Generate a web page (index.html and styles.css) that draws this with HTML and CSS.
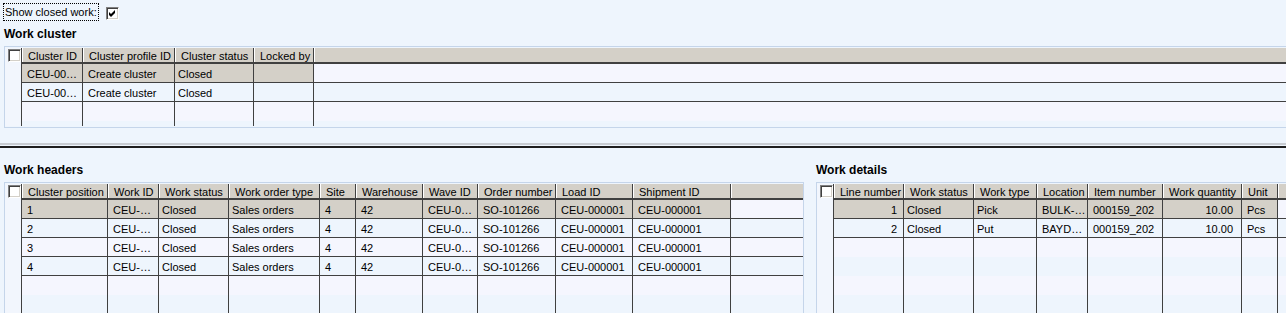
FILE: index.html
```html
<!DOCTYPE html>
<html lang="en">
<head>
    <meta charset="UTF-8">
    <title>Work clusters</title>
    <link rel="stylesheet" href="styles.css">
</head>
<body>
    <div class="toolbar">
        <span class="field-label">Show closed work:</span>
        <span class="check"><svg width="7" height="7" viewBox="0 0 7 7"><path d="M0 2 L2 4 L6 0 L6 3 L2 7 L0 5 Z" fill="#000"/></svg></span>
    </div>

    <h2 class="group-title">Work cluster</h2>
    <div class="panel panel-cluster">
        <div class="grid grid-cluster">
            <div class="row head">
                <div class="gutter"><span class="check"></span></div>
                <div>Cluster ID</div>
                <div>Cluster profile ID</div>
                <div>Cluster status</div>
                <div>Locked by</div>
                <div class="fill"></div>
            </div>
            <div class="row data current">
                <div class="gutter"></div>
                <div class="cell">CEU-00…</div>
                <div class="cell">Create cluster</div>
                <div class="cell e">Closed</div>
                <div class="cell"></div>
                <div class="fill"></div>
            </div>
            <div class="row data">
                <div class="gutter"></div>
                <div class="cell">CEU-00…</div>
                <div class="cell">Create cluster</div>
                <div class="cell e">Closed</div>
                <div class="cell"></div>
                <div class="fill"></div>
            </div>
            <div class="row">
                <div class="gutter"></div><div></div><div></div><div></div><div></div><div class="fill"></div>
            </div>
            <div class="row">
                <div class="gutter"></div><div></div><div></div><div></div><div></div><div class="fill"></div>
            </div>
        </div>
    </div>

    <div class="divider"></div>

    <div class="lower">
        <div class="section section-headers">
            <h2 class="group-title">Work headers</h2>
            <div class="panel">
                <div class="grid grid-headers">
                    <div class="row head">
                        <div class="gutter"><span class="check"></span></div>
                        <div>Cluster position</div>
                        <div>Work ID</div>
                        <div>Work status</div>
                        <div>Work order type</div>
                        <div>Site</div>
                        <div>Warehouse</div>
                        <div>Wave ID</div>
                        <div>Order number</div>
                        <div>Load ID</div>
                        <div>Shipment ID</div>
                        <div class="fill"></div>
                    </div>
                    <div class="row data current">
                        <div class="gutter"></div>
                        <div class="cell">1</div>
                        <div class="cell">CEU-…</div>
                        <div class="cell e">Closed</div>
                        <div class="cell e">Sales orders</div>
                        <div class="cell">4</div>
                        <div class="cell">42</div>
                        <div class="cell">CEU-0…</div>
                        <div class="cell">SO-101266</div>
                        <div class="cell">CEU-000001</div>
                        <div class="cell">CEU-000001</div>
                        <div class="fill"></div>
                    </div>
                    <div class="row data">
                        <div class="gutter"></div>
                        <div class="cell">2</div>
                        <div class="cell">CEU-…</div>
                        <div class="cell e">Closed</div>
                        <div class="cell e">Sales orders</div>
                        <div class="cell">4</div>
                        <div class="cell">42</div>
                        <div class="cell">CEU-0…</div>
                        <div class="cell">SO-101266</div>
                        <div class="cell">CEU-000001</div>
                        <div class="cell">CEU-000001</div>
                        <div class="fill"></div>
                    </div>
                    <div class="row data">
                        <div class="gutter"></div>
                        <div class="cell">3</div>
                        <div class="cell">CEU-…</div>
                        <div class="cell e">Closed</div>
                        <div class="cell e">Sales orders</div>
                        <div class="cell">4</div>
                        <div class="cell">42</div>
                        <div class="cell">CEU-0…</div>
                        <div class="cell">SO-101266</div>
                        <div class="cell">CEU-000001</div>
                        <div class="cell">CEU-000001</div>
                        <div class="fill"></div>
                    </div>
                    <div class="row data">
                        <div class="gutter"></div>
                        <div class="cell">4</div>
                        <div class="cell">CEU-…</div>
                        <div class="cell e">Closed</div>
                        <div class="cell e">Sales orders</div>
                        <div class="cell">4</div>
                        <div class="cell">42</div>
                        <div class="cell">CEU-0…</div>
                        <div class="cell">SO-101266</div>
                        <div class="cell">CEU-000001</div>
                        <div class="cell">CEU-000001</div>
                        <div class="fill"></div>
                    </div>
                    <div class="row">
                        <div class="gutter"></div><div></div><div></div><div></div><div></div><div></div><div></div><div></div><div></div><div></div><div></div><div class="fill"></div>
                    </div>
                    <div class="row">
                        <div class="gutter"></div><div></div><div></div><div></div><div></div><div></div><div></div><div></div><div></div><div></div><div></div><div class="fill"></div>
                    </div>
                </div>
            </div>
        </div>

        <div class="section section-details">
            <h2 class="group-title">Work details</h2>
            <div class="panel">
                <div class="grid grid-details">
                    <div class="row head">
                        <div class="gutter"><span class="check"></span></div>
                        <div>Line number</div>
                        <div>Work status</div>
                        <div>Work type</div>
                        <div>Location</div>
                        <div>Item number</div>
                        <div>Work quantity</div>
                        <div>Unit</div>
                        <div class="fill"></div>
                    </div>
                    <div class="row data current">
                        <div class="gutter"></div>
                        <div class="cell num">1</div>
                        <div class="cell e">Closed</div>
                        <div class="cell e">Pick</div>
                        <div class="cell">BULK-…</div>
                        <div class="cell">000159_202</div>
                        <div class="cell num qty">10.00</div>
                        <div class="cell">Pcs</div>
                        <div class="fill"></div>
                    </div>
                    <div class="row data">
                        <div class="gutter"></div>
                        <div class="cell num">2</div>
                        <div class="cell e">Closed</div>
                        <div class="cell e">Put</div>
                        <div class="cell">BAYD…</div>
                        <div class="cell">000159_202</div>
                        <div class="cell num qty">10.00</div>
                        <div class="cell">Pcs</div>
                        <div class="fill"></div>
                    </div>
                    <div class="row">
                        <div class="gutter"></div><div></div><div></div><div></div><div></div><div></div><div></div><div></div><div class="fill"></div>
                    </div>
                    <div class="row">
                        <div class="gutter"></div><div></div><div></div><div></div><div></div><div></div><div></div><div></div><div class="fill"></div>
                    </div>
                    <div class="row">
                        <div class="gutter"></div><div></div><div></div><div></div><div></div><div></div><div></div><div></div><div class="fill"></div>
                    </div>
                    <div class="row">
                        <div class="gutter"></div><div></div><div></div><div></div><div></div><div></div><div></div><div></div><div class="fill"></div>
                    </div>
                </div>
            </div>
        </div>
    </div>
</body>
</html>
```

FILE: styles.css
```css
html, body {
    margin: 0;
    height: 100%;
    overflow: hidden;
}

body {
    background-color: #eef5fd;
    font-family: "Liberation Sans", Arial, sans-serif;
    font-size: 11px;
    color: #000;
}

.toolbar {
    height: 27px;
    padding: 3px 0 0 3px;
    box-sizing: border-box;
    display: flex;
    align-items: flex-start;
}

.field-label {
    border: 1px dotted #000;
    padding: 1px 1px 0 1px;
    line-height: 15px;
}

.check {
    display: flex;
    align-items: center;
    justify-content: center;
    width: 13px;
    height: 13px;
    box-sizing: border-box;
    background-color: #fff;
    border: 1px solid;
    border-color: #808080 #fff #fff #808080;
    box-shadow: inset 1px 1px 0 #404040, inset -1px -1px 0 #d4d0c8;
}

.toolbar .check {
    margin: 4px 0 0 7px;
}

.group-title {
    margin: 0 0 5px;
    padding-left: 4px;
    font-size: 12px;
    font-weight: bold;
    line-height: 14px;
}

.panel {
    border: 1px solid #c5d5ea;
    padding: 1px 0;
    background-color: #eef5fd;
}

.panel-cluster {
    margin: 0 -10px 0 4px;
}

.grid {
    overflow: hidden;
}

.grid-cluster {
    height: 78px;
}

.row {
    display: grid;
    height: 19px;
}

.grid-cluster .row {
    grid-template-columns: 17px 61px 92px 79px 60px 1fr;
}

.grid-headers .row {
    grid-template-columns: 17px 86px 51px 70px 91px 36px 67px 55px 78px 77px 98px 1fr;
}

.grid-details .row {
    grid-template-columns: 17px 70px 70px 63px 51px 75px 79px 36px 1fr;
}

.row > div {
    box-sizing: border-box;
    border-right: 1px solid #404040;
    padding: 2px 5px 0;
    line-height: 16px;
    white-space: nowrap;
    overflow: hidden;
}

.row:nth-child(even) > div {
    background-color: #f5f6fe;
}

.row > .fill {
    border-right: 0;
}

.row > .gutter,
.row:nth-child(even) > .gutter {
    background-color: #f2f6fd;
    padding: 0;
}

.row.data > div {
    border-bottom: 1px solid #404040;
}

.row.data > .gutter {
    border-bottom: 0;
}

.row.current > .cell {
    background-color: #d4d0c8;
}

.row .e {
    padding-left: 3px;
}

.row .num {
    text-align: right;
    padding-right: 6px;
}

.row .qty {
    padding-right: 8px;
}

.row.head {
    height: 16px;
}

.row.head > div {
    background-color: #d4d0c8;
    border-bottom: 2px solid #404040;
    box-shadow: inset 1px 0 0 #fff;
    padding: 3px 0 0 6px;
    line-height: 11px;
}

.row.head .gutter {
    background-color: #f2f6fd;
    border-bottom: 0;
    box-shadow: none;
    padding: 1px 0 0 3px;
}

.divider {
    margin-top: 15px;
    height: 1px;
    border-top: 2px solid #c8ccd2;
    border-bottom: 2px solid #1e1e1e;
}

.lower {
    display: flex;
    gap: 12px;
    padding-left: 4px;
    margin-top: 15px;
}

.section-headers {
    flex: none;
    width: 800px;
}

.section-details {
    flex: 1;
    margin-right: -10px;
}

.section .group-title {
    padding-left: 0;
    margin-bottom: 5px;
}
```
